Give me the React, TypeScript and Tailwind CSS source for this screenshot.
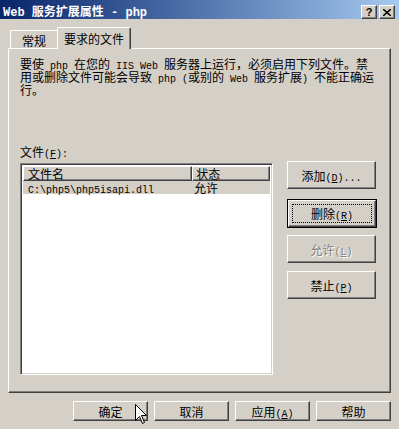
import React from 'react';

// SimSun-like half-width latin: 6px per character
const M = ({ children }: { children: React.ReactNode }) => (
  <span className="font-mono text-[10px]">{children}</span>
);

const raised =
  'border border-t-white border-l-white border-r-[#404040] border-b-[#404040] shadow-[inset_-1px_-1px_0_#808080]';

const Button = ({
  children,
  className = '',
  focused = false,
}: {
  children: React.ReactNode;
  className?: string;
  focused?: boolean;
}) => {
  if (focused) {
    return (
      <div className={`border border-black bg-[#d4d0c8] ${className}`}>
        <div className={`h-full w-full ${raised} flex items-center justify-center p-[3px]`}>
          <div className="h-full w-full border border-dotted border-black flex items-center justify-center">
            <span className="block h-[13px] leading-[13px] whitespace-nowrap">{children}</span>
          </div>
        </div>
      </div>
    );
  }
  return (
    <div className={`${raised} bg-[#d4d0c8] flex items-center justify-center ${className}`}>
      <span className="block h-[13px] leading-[13px] whitespace-nowrap">{children}</span>
    </div>
  );
};

const Line = ({ children }: { children: React.ReactNode }) => (
  <div className="h-[13px] leading-[13px] whitespace-pre">{children}</div>
);

const Cursor = () => (
  <svg width="13" height="21" viewBox="0 0 13 21" className="absolute left-[135px] top-[404px]">
    <path
      d="M0.5 0.5 L0.5 16.5 L4.5 12.5 L7.5 19.5 L9.5 18.5 L6.5 11.5 L11.5 11.5 Z"
      fill="white"
      stroke="black"
      strokeWidth="1"
    />
  </svg>
);

export default function App() {
  return (
    <div className="relative w-[399px] h-[429px] overflow-hidden bg-[#d4d0c8] text-[12px] leading-[13px] text-black font-['Noto_Sans_CJK_SC',sans-serif] flex flex-col">
      {/* title bar */}
      <div className="h-[19px] bg-gradient-to-r from-[#0a246a] to-[#a6caf0] flex items-start pl-[3px] pr-[4px] pt-[4px]">
        <div className="h-[13px] leading-[13px] text-white font-bold whitespace-pre">
          <span className="font-mono text-[12px]">Web </span>
          服务扩展属性
          <span className="font-mono text-[12px]"> - php</span>
        </div>
        <div className="ml-auto flex gap-[2px] mt-[1px]">
          <div className={`w-[16px] h-[14px] bg-[#d4d0c8] ${raised} flex items-center justify-center`}>
            <span className="font-['Liberation_Sans',sans-serif] font-bold text-[11px] leading-none">?</span>
          </div>
          <div className={`w-[16px] h-[14px] bg-[#d4d0c8] ${raised} flex items-center justify-center`}>
            <svg width="8" height="7" viewBox="0 0 8 7">
              <path d="M0 0 L8 7 M8 0 L0 7" stroke="black" strokeWidth="1.6" />
            </svg>
          </div>
        </div>
      </div>

      {/* tabs */}
      <div className="mt-[8px] h-[21px] flex items-end pl-[10px]">
        <div className="w-[47px] h-[18px] border-t border-l border-t-white border-l-white rounded-tl-[2px] flex items-center justify-center pt-[1px]">
          常规
        </div>
        <div className="relative z-10 w-[74px] h-[22px] -mb-[1px] bg-[#d4d0c8] border-t border-l border-r border-t-white border-l-white border-r-[#404040] shadow-[inset_-1px_0_0_#808080] rounded-t-[2px] flex items-start justify-center pt-[4px]">
          要求的文件
        </div>
      </div>

      {/* tab panel */}
      <div className="mx-[8px] h-[345px] border border-t-white border-l-white border-r-[#404040] border-b-[#404040] shadow-[inset_-1px_-1px_0_#808080] pl-[11px] pt-[8px] flex flex-col">
        <div className="flex flex-col">
          <Line>
            要使<M> php </M>在您的<M> IIS Web </M>服务器上运行，必须启用下列文件。禁
          </Line>
          <Line>
            用或删除文件可能会导致<M> php (</M>或别的<M> Web </M>服务扩展<M>) </M>不能正确运
          </Line>
          <Line>行。</Line>
        </div>

        <div className="mt-[49px]">
          <Line>
            文件<M>(</M>
            <M>
              <span className="underline">F</span>
            </M>
            <M>):</M>
          </Line>
        </div>

        <div className="mt-[3px] flex items-start">
          {/* list box */}
          <div className="mt-[2px] w-[253px] h-[212px] bg-white border border-t-[#808080] border-l-[#808080] border-r-white border-b-white shadow-[inset_1px_1px_0_#404040,inset_-1px_-1px_0_#d4d0c8] p-[1px] pr-[2px]">
            <div className="flex ml-[1px] mt-[1px] h-[15px]">
              <div className={`w-[170px] h-full ${raised} bg-[#d4d0c8] pl-[4px] leading-[13px]`}>文件名</div>
              <div className={`w-[78px] h-full ${raised} bg-[#d4d0c8] pl-[3px] leading-[13px]`}>状态</div>
            </div>
            <div className="ml-[1px] flex h-[13px] bg-[#d4d0c8] leading-[13px]">
              <div className="w-[170px] pl-[5px] whitespace-pre">
                <M>C:\php5\php5isapi.dll</M>
              </div>
              <div className="pl-[1px]">允许</div>
            </div>
          </div>

          {/* side buttons */}
          <div className="ml-[14px] flex flex-col">
            <Button className="w-[89px] h-[28px]">
              添加<M>(</M>
              <M>
                <span className="underline">D</span>
              </M>
              <M>)...</M>
            </Button>
            <Button focused className="mt-[10px] w-[90px] h-[29px]">
              删除<M>(</M>
              <M>
                <span className="underline">R</span>
              </M>
              <M>)</M>
            </Button>
            <Button className="mt-[7px] w-[89px] h-[28px]">
              <span className="text-[#808080] [text-shadow:1px_1px_0_#ffffff]">
                允许<M>(</M>
                <M>
                  <span className="underline">L</span>
                </M>
                <M>)</M>
              </span>
            </Button>
            <Button className="mt-[8px] w-[89px] h-[28px]">
              禁止<M>(</M>
              <M>
                <span className="underline">P</span>
              </M>
              <M>)</M>
            </Button>
          </div>
        </div>
      </div>

      {/* bottom buttons */}
      <div className="mt-[8px] flex justify-end gap-[6px] pr-[8px]">
        <Button className="w-[75px] h-[20px]">确定</Button>
        <Button className="w-[75px] h-[20px]">取消</Button>
        <Button className="w-[75px] h-[20px]">
          应用<M>(</M>
          <M>
            <span className="underline">A</span>
          </M>
          <M>)</M>
        </Button>
        <Button className="w-[75px] h-[20px]">帮助</Button>
      </div>

      <Cursor />
    </div>
  );
}
